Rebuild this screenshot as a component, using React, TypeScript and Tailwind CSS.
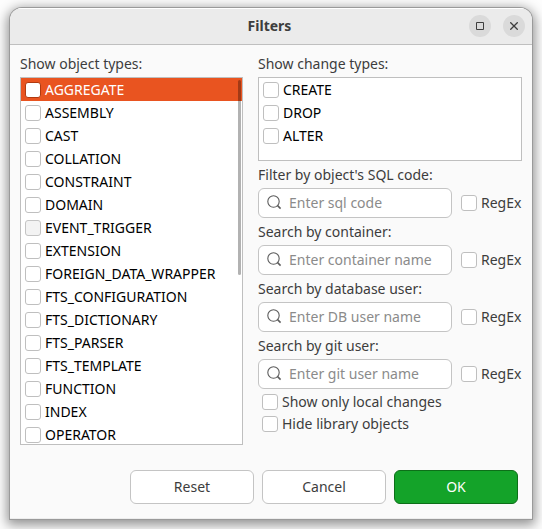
import { useState } from 'react';

const objectTypes = [
  'AGGREGATE', 'ASSEMBLY', 'CAST', 'COLLATION', 'CONSTRAINT', 'DOMAIN', 'EVENT_TRIGGER', 'EXTENSION',
  'FOREIGN_DATA_WRAPPER', 'FTS_CONFIGURATION', 'FTS_DICTIONARY', 'FTS_PARSER', 'FTS_TEMPLATE',
  'FUNCTION', 'INDEX', 'OPERATOR',
];
const changeTypes = ['CREATE', 'DROP', 'ALTER'];
const searches = [
  { id: 'sql', label: "Filter by object's SQL code:", hint: 'Enter sql code' },
  { id: 'container', label: 'Search by container:', hint: 'Enter container name' },
  { id: 'db', label: 'Search by database user:', hint: 'Enter DB user name' },
  { id: 'git', label: 'Search by git user:', hint: 'Enter git user name' },
];

type CheckProps = { label: string; tone?: string; box?: string };

function Check({ label, tone = 'text-[#3d3d3d]', box = 'border-[#bfbfbf] bg-white' }: CheckProps) {
  return (
    <label className={`flex items-center gap-1 whitespace-nowrap ${tone}`}>
      <input
        type="checkbox"
        className={`size-4 shrink-0 appearance-none rounded-[3px] border checked:bg-[#e95420] ${box}`}
      />
      {label}
    </label>
  );
}

function SearchIcon() {
  return (
    <svg className="size-4 shrink-0" viewBox="0 0 16 16" fill="none" stroke="#5c5c5c" strokeWidth="1.1" aria-hidden="true">
      <circle cx="6.5" cy="6.5" r="5.7" />
      <path d="M10.6 10.6l3 3" strokeWidth="1.5" />
    </svg>
  );
}

export default function App() {
  const [selected, setSelected] = useState('AGGREGATE');
  return (
    <main className="min-h-screen bg-[#fdfdfd] px-[10px] pt-2 pb-[10px] font-['Noto_Sans',sans-serif] text-[14px] leading-5 text-[#3d3d3d]">
      <section className="overflow-hidden rounded-t-xl border-b border-[#ededed] bg-[#fafafa] shadow-[0_0_0_1px_#9a9a9a,0_3px_12px_3px_rgba(0,0,0,0.42)]">
        <header className="grid h-[37px] grid-cols-[1fr_auto_1fr] items-center border-b border-[#bfbfbf] bg-[#ebebeb] pr-[7px] pl-1 shadow-[inset_0_1px_0_#ffffff]">
          <h1 className="col-start-2 text-[14px] font-bold">Filters</h1>
          <div className="flex justify-end gap-3">
            <button type="button" aria-label="Maximize" className="flex size-[22px] items-center justify-center rounded-full bg-[#dadada]">
              <svg className="size-2" viewBox="0 0 8 8" fill="none" stroke="#3d3d3d" aria-hidden="true">
                <path d="M.5.5h7v7h-7z" />
              </svg>
            </button>
            <button type="button" aria-label="Close" className="flex size-[22px] items-center justify-center rounded-full bg-[#dadada]">
              <svg className="size-2" viewBox="0 0 8 8" fill="none" stroke="#3d3d3d" strokeWidth="1.3" aria-hidden="true">
                <path d="M.3.3l7.4 7.4M7.7.3L.3 7.7" />
              </svg>
            </button>
          </div>
        </header>

        <div className="flex gap-[15px] px-[10px] pt-[9px]">
          <div className="min-w-0 flex-[223]">
            <h2 className="mb-[3px]">Show object types:</h2>
            <div className="relative h-[368px] overflow-hidden border border-[#bfbfbf] bg-white">
              <ul>
                {objectTypes.map((name) => (
                  <li
                    key={name}
                    onClick={() => setSelected(name)}
                    className={`flex h-[23px] items-center pl-1 ${name === selected ? 'bg-[#e95420]' : ''}`}
                  >
                    <Check
                      label={name}
                      tone={name === selected ? 'text-white' : 'text-black'}
                      box={
                        name === selected
                          ? 'border-[#b03a10] bg-white'
                          : name === 'EVENT_TRIGGER'
                            ? 'border-[#c4c4c4] bg-[#f3f3f3]'
                            : 'border-[#bfbfbf] bg-white'
                      }
                    />
                  </li>
                ))}
              </ul>
              <div className="absolute top-[2px] right-px h-[195px] w-[3px] rounded-full bg-black/30" />
            </div>
          </div>

          <div className="min-w-0 flex-[264]">
            <h2 className="mb-[3px]">Show change types:</h2>
            <ul className="h-[84px] border border-[#bfbfbf] bg-white">
              {changeTypes.map((name) => (
                <li key={name} className="flex h-[23px] items-center pl-1">
                  <Check label={name} tone="text-black" />
                </li>
              ))}
            </ul>
            {searches.map((s) => (
              <div key={s.id}>
                <label htmlFor={s.id} className="block h-[27px] pt-1">{s.label}</label>
                <div className="flex items-center gap-[9px]">
                  <div className="flex h-[30px] min-w-0 flex-1 items-center gap-[6px] rounded-md border border-[#c4c4c4] bg-white px-2">
                    <SearchIcon />
                    <input
                      id={s.id}
                      type="text"
                      placeholder={s.hint}
                      className="min-w-0 flex-1 bg-transparent outline-none placeholder:text-[#8b8b8b]"
                    />
                  </div>
                  <div className="w-[61px] shrink-0">
                    <Check label="RegEx" />
                  </div>
                </div>
              </div>
            ))}
            <div className="flex flex-col gap-[2px] pt-[3px] pl-1">
              <Check label="Show only local changes" />
              <Check label="Hide library objects" />
            </div>
          </div>
        </div>

        <footer className="flex justify-end gap-2 pt-[25px] pr-[14px] pb-[14px]">
          <button type="button" className="h-[34px] w-[124px] rounded-md border border-[#c4c4c4] bg-white">Reset</button>
          <button type="button" className="h-[34px] w-[124px] rounded-md border border-[#c4c4c4] bg-white">Cancel</button>
          <button type="button" className="h-[34px] w-[124px] rounded-md border border-[#0d6f19] bg-[#14a329] text-white">OK</button>
        </footer>
      </section>
    </main>
  );
}
